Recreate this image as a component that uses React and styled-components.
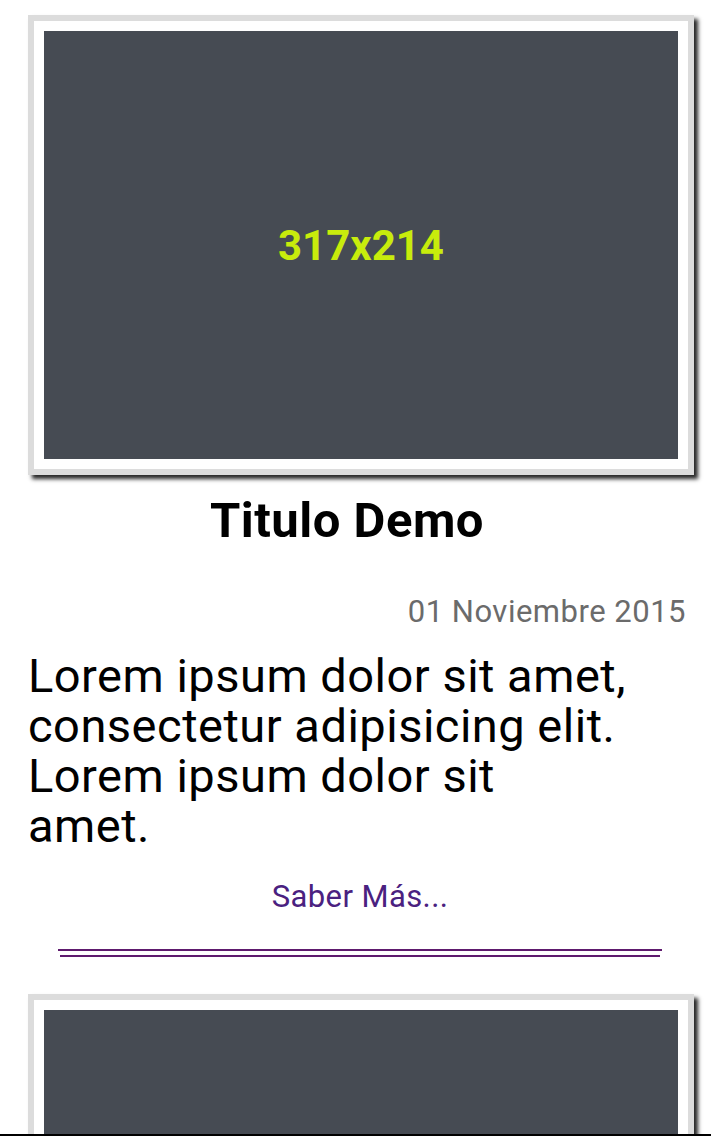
import React from 'react'
import styled, { createGlobalStyle } from 'styled-components'

const GlobalStyle = createGlobalStyle`
  html, body {
    margin: 0;
    padding: 0;
    background: #fff;
    font-family: Roboto, "Liberation Sans", sans-serif;
  }
`;

const Page = styled.div`
  height: 100vh;
  box-sizing: border-box;
  padding: 15px 25px 0 28px;
  overflow: hidden;
`;

const Post = styled.article`
  display: flex;
  flex-direction: column;
`;

const Frame = styled.div`
  width: 666px;
  box-sizing: border-box;
  border: 6px solid #dcdcdc;
  padding: 10px;
  background: #fff;
  box-shadow: 4px 4px 4px rgba(0,0,0,0.85);
`;

const Placeholder = styled.div`
  height: 428px;
  background: #464b53;
  display: flex;
  align-items: center;
  justify-content: center;
  color: #c8ec0c;
  font-weight: 700;
  font-size: 42px;
`;

const Title = styled.h2`
  margin: 18px 0 0;
  padding-right: 20px;
  text-align: center;
  font-size: 49px;
  line-height: 56px;
  letter-spacing: 0.5px;
  font-weight: 700;
  color: #000;
`;

const DateLine = styled.div`
  margin-top: 45px;
  text-align: right;
  font-size: 31px;
  line-height: 36px;
  letter-spacing: 0.5px;
  color: #6b6b6b;
`;

const Text = styled.p`
  margin: 21px 0 0;
  font-size: 47px;
  line-height: 50px;
  letter-spacing: 0.5px;
  color: #000;
`;

const More = styled.a`
  display: block;
  margin-top: 28px;
  padding-left: 6px;
  text-align: center;
  font-size: 31px;
  line-height: 36px;
  letter-spacing: 0.4px;
  color: #4a2180;
  text-decoration: none;
`;

const Divider = styled.div`
  margin: 34px 24px 37px 30px;
  display: flex;
  flex-direction: column;
  gap: 4px;
`;

const Rule = styled.div`
  height: 2px;
  background: #5e1a6e;
  margin: 0 ${p => p.$inset || 0}px;
`;

const BottomEdge = styled.div`
  position: fixed;
  left: 0;
  right: 0;
  bottom: 0;
  height: 2px;
  background: #000;
`;

const posts = [
  { id: 1, size: '317x214', title: 'Titulo Demo', date: '01 Noviembre 2015' },
  { id: 2, size: '317x214', title: 'Titulo Demo', date: '01 Noviembre 2015' },
];

function PostCard({ post, last }) {
  return (
    <Post>
      <Frame>
        <Placeholder>{post.size}</Placeholder>
      </Frame>
      <Title>{post.title}</Title>
      <DateLine>{post.date}</DateLine>
      <Text>
        Lorem ipsum dolor sit amet,<br />
        consectetur adipisicing elit.<br />
        Lorem ipsum dolor sit<br />
        amet.
      </Text>
      <More href="#">Saber Más...</More>
      {!last && (
        <Divider>
          <Rule />
          <Rule $inset={2} />
        </Divider>
      )}
    </Post>
  )
}

export default function App() {
  return (
    <>
      <GlobalStyle />
      <Page>
        {posts.map((p, i) => (
          <PostCard key={p.id} post={p} last={i === posts.length - 1} />
        ))}
      </Page>
      <BottomEdge />
    </>
  )
}
